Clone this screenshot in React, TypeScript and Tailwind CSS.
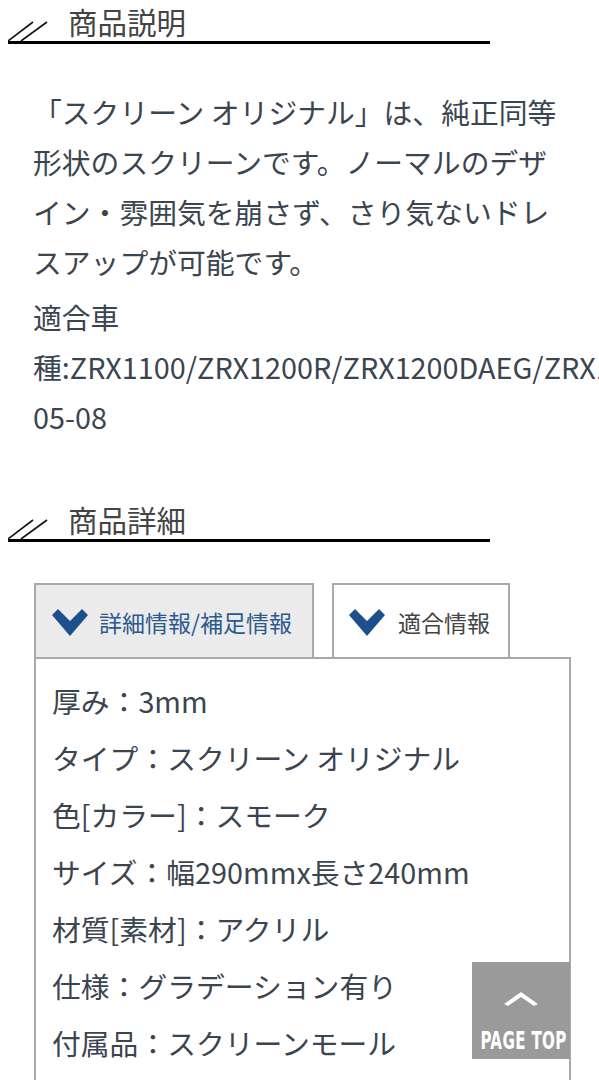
import React from "react";

const font = { fontFamily: '"Noto Sans CJK JP", "Noto Sans", sans-serif' };

function Heading({ title }: { title: string }) {
  return (
    <div className="ml-[8px] w-[482px] h-[44px] flex items-end border-b-[3px] border-black">
      <svg width="40" height="20" viewBox="0 0 40 20" className="shrink-0 block">
        <line x1="0" y1="20" x2="25" y2="1" stroke="#111" strokeWidth="1.6" />
        <line x1="13" y1="20" x2="39" y2="1" stroke="#111" strokeWidth="1.6" />
      </svg>
      <div className="ml-[20px] leading-[40px] text-[29.5px] text-[#444]">{title}</div>
    </div>
  );
}

function Chevron() {
  return (
    <svg width="36" height="27" viewBox="0 0 36 27" className="shrink-0 block">
      <polygon points="0,6 6,0 18,12 30,0 36,6 18,27" fill="#1e4f8d" />
    </svg>
  );
}

export default function App() {
  const details = [
    "厚み：3mm",
    "タイプ：スクリーン オリジナル",
    "色[カラー]：スモーク",
    "サイズ：幅290mmx長さ240mm",
    "材質[素材]：アクリル",
    "仕様：グラデーション有り",
    "付属品：スクリーンモール",
  ];
  return (
    <div className="w-[599px] overflow-hidden bg-white" style={font}>
      <Heading title="商品説明" />
      <div className="mt-[43px] pl-[33px] pr-[34px] text-[28.8px] leading-[50px] text-[#3b4550]">
        <p>「スクリーン オリジナル」は、純正同等形状のスクリーンです。ノーマルのデザイン・雰囲気を崩さず、さり気ないドレスアップが可能です。</p>
        <p className="mt-[5px]">
          <span className="block whitespace-nowrap">適合車</span>
          <span className="block whitespace-nowrap">種:ZRX1100/ZRX1200R/ZRX1200DAEG/ZRX1100</span>
          <span className="block whitespace-nowrap">05-08</span>
        </p>
      </div>
      <div className="mt-[56px]">
        <Heading title="商品詳細" />
      </div>
      <div className="mt-[41px] ml-[34px] w-[537px]">
        <div className="flex gap-[18px] items-end">
          <div className="w-[280px] h-[74px] bg-[#ebebeb] border-[2px] border-b-0 border-[#aaaaaa] flex items-center pl-[16px] pt-[2px]">
            <Chevron />
            <span className="ml-[11px] text-[23px] text-[#2c5a8e] leading-none">詳細情報/補足情報</span>
          </div>
          <div className="w-[178px] h-[74px] bg-white border-[2px] border-b-0 border-[#aaaaaa] flex items-center pl-[15px] pt-[2px]">
            <Chevron />
            <span className="ml-[13px] text-[23px] text-[#444] leading-none">適合情報</span>
          </div>
        </div>
        <div className="border-[2px] border-[#aaaaaa] px-[16px] pt-[13px] pb-[80px] text-[28.8px] leading-[57px] text-[#3b4550]">
          {details.map((d) => (
            <div key={d} className="whitespace-nowrap">{d}</div>
          ))}
        </div>
      </div>
      <div className="fixed right-[29px] bottom-[21px] w-[98px] h-[97px] bg-[#9a9a9a] flex flex-col items-center">
        <svg width="34" height="17" viewBox="0 0 34 17" className="mt-[28px] block">
          <polygon points="0,14 17,2 34,14 30,16 17,7 4,16" fill="#ffffff" />
        </svg>
        <div
          className="mt-[22px] ml-[6px] text-white font-bold text-[24px] leading-none tracking-[0.5px] scale-x-[0.7] whitespace-nowrap"
          style={{ fontFamily: '"DejaVu Sans Condensed", "Liberation Sans Narrow", sans-serif' }}
        >
          PAGE TOP
        </div>
      </div>
    </div>
  );
}
